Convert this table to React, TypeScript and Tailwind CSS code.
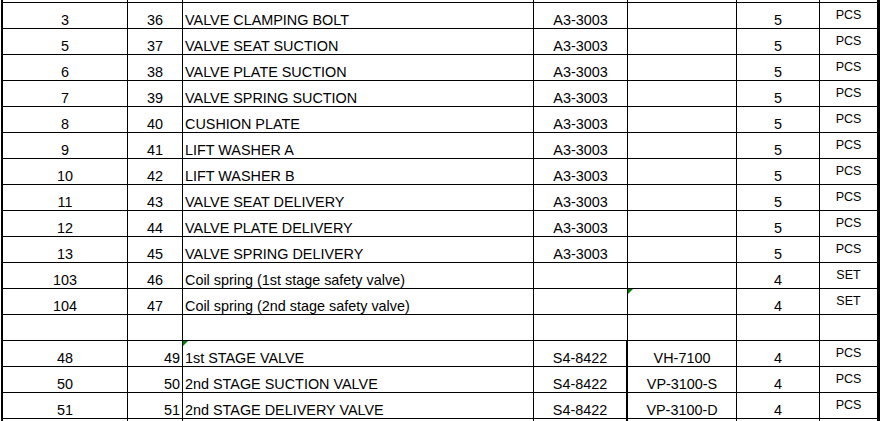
type Row = {
  no: string;
  item: string;
  name: string;
  dwg: string;
  part: string;
  qty: string;
  unit: string;
  lower?: boolean;
  markPart?: boolean;
  markName?: boolean;
};

const rows: Row[] = [
  { no: "3", item: "36", name: "VALVE CLAMPING BOLT", dwg: "A3-3003", part: "", qty: "5", unit: "PCS" },
  { no: "5", item: "37", name: "VALVE SEAT SUCTION", dwg: "A3-3003", part: "", qty: "5", unit: "PCS" },
  { no: "6", item: "38", name: "VALVE PLATE SUCTION", dwg: "A3-3003", part: "", qty: "5", unit: "PCS" },
  { no: "7", item: "39", name: "VALVE SPRING SUCTION", dwg: "A3-3003", part: "", qty: "5", unit: "PCS" },
  { no: "8", item: "40", name: "CUSHION PLATE", dwg: "A3-3003", part: "", qty: "5", unit: "PCS" },
  { no: "9", item: "41", name: "LIFT WASHER A", dwg: "A3-3003", part: "", qty: "5", unit: "PCS" },
  { no: "10", item: "42", name: "LIFT WASHER B", dwg: "A3-3003", part: "", qty: "5", unit: "PCS" },
  { no: "11", item: "43", name: "VALVE SEAT DELIVERY", dwg: "A3-3003", part: "", qty: "5", unit: "PCS" },
  { no: "12", item: "44", name: "VALVE PLATE DELIVERY", dwg: "A3-3003", part: "", qty: "5", unit: "PCS" },
  { no: "13", item: "45", name: "VALVE SPRING DELIVERY", dwg: "A3-3003", part: "", qty: "5", unit: "PCS" },
  { no: "103", item: "46", name: "Coil spring (1st stage safety valve)", dwg: "", part: "", qty: "4", unit: "SET" },
  { no: "104", item: "47", name: "Coil spring (2nd stage safety valve)", dwg: "", part: "", qty: "4", unit: "SET", markPart: true },
  { no: "", item: "", name: "", dwg: "", part: "", qty: "", unit: "" },
  { no: "48", item: "49", name: "1st STAGE VALVE", dwg: "S4-8422", part: "VH-7100", qty: "4", unit: "PCS", lower: true, markName: true },
  { no: "50", item: "50", name: "2nd STAGE SUCTION VALVE", dwg: "S4-8422", part: "VP-3100-S", qty: "4", unit: "PCS", lower: true },
  { no: "51", item: "51", name: "2nd STAGE DELIVERY VALVE", dwg: "S4-8422", part: "VP-3100-D", qty: "4", unit: "PCS", lower: true },
];

function Mark() {
  return (
    <svg className="absolute top-0 left-0" width="5" height="5" viewBox="0 0 5 5">
      <polygon points="0,0 5,0 0,5" fill="#008000" />
    </svg>
  );
}

function Spacer({ thick }: { thick?: boolean }) {
  return (
    <div className="flex h-[2px]">
      <div className="w-[125px] border-r border-black" />
      <div className="w-[55px] border-r border-black" />
      <div className="w-[351px] border-r border-black" />
      <div className={`w-[94px] border-black ${thick ? "border-r-2" : "border-r"}`} />
      <div className="w-[109px] border-r border-black" />
      <div className="w-[83px] border-r border-black" />
      <div className="w-[57px]" />
    </div>
  );
}

export default function App() {
  const cell = "h-[25px] flex items-end leading-[16px] border-r border-black";
  return (
    <div
      className="w-[881px] h-[421px] bg-white text-black text-[14.4px] pl-[1px] overflow-hidden"
      style={{ fontFamily: '"Liberation Sans", Arial, sans-serif' }}
    >
      <div className="w-[879px] border-l-2 border-r-[3px] border-black">
        <Spacer />
        {rows.map((r, i) => (
          <div key={i} className="flex border-t border-black">
            <div className={`${cell} w-[125px] justify-center`}>{r.no}</div>
            <div className={`${cell} w-[55px] ${r.lower ? "justify-end pr-[2px]" : "justify-center"}`}>
              {r.item}
            </div>
            <div className={`${cell} w-[351px] pl-[2px] relative whitespace-nowrap`}>
              {r.markName && <Mark />}
              {r.name}
            </div>
            <div
              className={`h-[25px] flex items-end leading-[16px] border-black w-[94px] justify-center ${
                r.lower ? "border-r-2" : "border-r"
              }`}
            >
              {r.dwg}
            </div>
            <div className={`${cell} w-[109px] justify-center relative`}>
              {r.markPart && <Mark />}
              {r.part}
            </div>
            <div className={`${cell} w-[83px] justify-center leading-[14px]`}>{r.qty}</div>
            <div className="h-[25px] w-[57px] flex justify-center pt-[5px] text-[12.5px] leading-[14px]">
              {r.unit}
            </div>
          </div>
        ))}
        <div className="border-t border-black">
          <Spacer thick />
        </div>
      </div>
    </div>
  );
}
